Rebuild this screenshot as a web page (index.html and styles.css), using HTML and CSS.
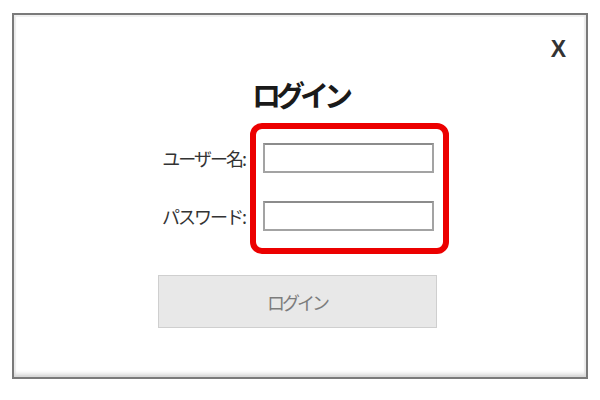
FILE: index.html
```html
<!DOCTYPE html>
<html lang="ja">
<head>
    <meta charset="UTF-8">
    <meta name="viewport" content="width=device-width, initial-scale=1.0">
    <title>ログイン</title>
    <link rel="stylesheet" href="styles.css">
</head>
<body>

    <div class="dialog">
        <button class="close-btn" type="button">X</button>

        <h2 class="title">ログイン</h2>

        <form class="login-form">
            <div class="form-row">
                <div class="labels">
                    <label for="user">ユーザー名:</label>
                    <label for="pass">パスワード:</label>
                </div>
                <div class="highlight">
                    <input type="text" id="user">
                    <input type="password" id="pass">
                </div>
            </div>

            <button class="submit-btn" type="submit" disabled>ログイン</button>
        </form>
    </div>

</body>
</html>
```

FILE: styles.css
```css
body {
    margin: 0;
    background-color: white;
    font-family: "Noto Sans CJK JP", "Liberation Sans", sans-serif;
    color: #333;
}

.dialog {
    position: relative;
    box-sizing: border-box;
    width: 576px;
    height: 366px;
    margin: 13px 0 0 12px;
    border: 2px solid #7a7a7a;
    background-color: white;
    box-shadow: inset 0 -4px 4px -1px #d6d6d6, inset 0 0 0 2px #f0f0f0;
    display: flex;
    flex-direction: column;
    align-items: center;
    padding-top: 62px;
}

.close-btn {
    position: absolute;
    top: 21px;
    right: 20px;
    border: none;
    background: none;
    padding: 0;
    font-family: "Liberation Sans", Arial, sans-serif;
    font-weight: bold;
    font-size: 23px;
    color: #333;
    cursor: pointer;
}

.title {
    margin: 0;
    font-size: 29px;
    line-height: 34px;
    letter-spacing: -5px;
    font-weight: bold;
    color: #1a1a1a;
}

.login-form {
    display: flex;
    flex-direction: column;
    align-items: center;
    padding-right: 6px;
    margin-top: 12px;
}

.form-row {
    display: flex;
    gap: 5px;
}

.labels {
    width: 100px;
    display: flex;
    flex-direction: column;
    align-items: flex-end;
    gap: 28px;
    padding-top: 20px;
}

.labels label {
    height: 30px;
    line-height: 30px;
    font-size: 18px;
    letter-spacing: -2px;
    color: #333;
}

.highlight {
    width: 199px;
    box-sizing: border-box;
    border: 6px solid #ec0000;
    border-radius: 12px;
    padding: 14px 9px 17px 7px;
    display: flex;
    flex-direction: column;
    gap: 28px;
}

.highlight input {
    box-sizing: border-box;
    width: 171px;
    height: 30px;
    margin: 0;
    border: 2px solid #a3a3a3;
    border-top-color: #8c8c8c;
    background-color: white;
    font-size: 14px;
}

.submit-btn {
    width: 279px;
    height: 53px;
    margin-top: 21px;
    border: 1px solid #cfcfcf;
    background-color: #e8e8e8;
    color: #7c7c7c;
    font-family: "Noto Sans CJK JP", sans-serif;
    font-size: 18px;
    letter-spacing: -3px;
}
```
